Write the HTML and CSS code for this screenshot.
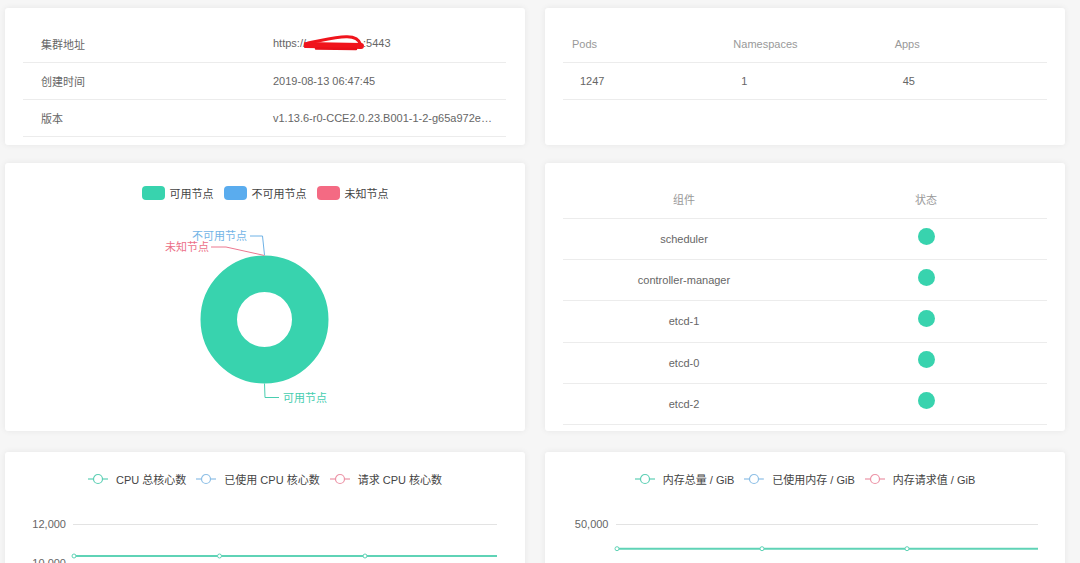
FILE: index.html
```html
<!DOCTYPE html>
<html lang="zh-CN">
<head>
<meta charset="utf-8">
<title>集群概览</title>
<link rel="stylesheet" href="styles.css">
</head>
<body>
<div class="page">
  <div class="row r1">
    <section class="card info">
      <div class="kv-row"><div class="k">集群地址</div><div class="v">https://<svg class="redact" width="60" height="18" viewBox="0 0 60 18"><path d="M2 10 L57 11" stroke="#f0141c" stroke-width="6" fill="none" stroke-linecap="round"/><path d="M4 8 C20 5 32 2 42 1.8 C50 1.5 55 4 57 10" stroke="#f0141c" stroke-width="3" fill="none" stroke-linecap="round"/><path d="M12 13.5 L52 14" stroke="#e8101a" stroke-width="2.5" fill="none" stroke-linecap="round"/></svg>:5443</div></div>
      <div class="kv-row"><div class="k">创建时间</div><div class="v">2019-08-13 06:47:45</div></div>
      <div class="kv-row"><div class="k">版本</div><div class="v">v1.13.6-r0-CCE2.0.23.B001-1-2-g65a972e3d5b1</div></div>
    </section>
    <section class="card stats">
      <div class="st-row st-head"><div>Pods</div><div>Namespaces</div><div>Apps</div></div>
      <div class="st-row st-body"><div>1247</div><div>1</div><div>45</div></div>
    </section>
  </div>

  <div class="row r2">
    <section class="card pie">
      <div class="legend">
        <div class="lg-item"><span class="sw sw-green"></span><span>可用节点</span></div>
        <div class="lg-item"><span class="sw sw-blue"></span><span>不可用节点</span></div>
        <div class="lg-item"><span class="sw sw-red"></span><span>未知节点</span></div>
      </div>
      <svg class="pie-svg" width="520" height="220" viewBox="0 0 520 220">
        <circle cx="259.5" cy="109.5" r="45.75" fill="none" stroke="#38d3ae" stroke-width="36.5"/>
        <polyline points="245,26 257.5,26 259.5,45" fill="none" stroke="#6fb2e6" stroke-width="1"/>
        <polyline points="206,37 221,37 259.5,45.5" fill="none" stroke="#ec7890" stroke-width="1"/>
        <polyline points="259.5,173.5 260,187.5 274,187.5" fill="none" stroke="#49ceb0" stroke-width="1"/>
        <text class="lbl lbl-blue" x="242" y="26" text-anchor="end">不可用节点</text>
        <text class="lbl lbl-red" x="204" y="37" text-anchor="end">未知节点</text>
        <text class="lbl lbl-green" x="278" y="188">可用节点</text>
      </svg>
    </section>
    <section class="card comps">
      <div class="cp-row cp-head"><div>组件</div><div>状态</div></div>
      <div class="cp-row"><div>scheduler</div><div><span class="dot"></span></div></div>
      <div class="cp-row"><div>controller-manager</div><div><span class="dot"></span></div></div>
      <div class="cp-row"><div>etcd-1</div><div><span class="dot"></span></div></div>
      <div class="cp-row"><div>etcd-0</div><div><span class="dot"></span></div></div>
      <div class="cp-row"><div>etcd-2</div><div><span class="dot"></span></div></div>
    </section>
  </div>

  <div class="row r3">
    <section class="card line">
      <div class="legend legend-line">
        <div class="lg-item"><svg class="li" width="20" height="12" viewBox="0 0 20 12"><line x1="0" y1="6" x2="20" y2="6" stroke="#5ccfb4" stroke-width="1.2"/><circle cx="10" cy="6" r="4.5" fill="#fff" stroke="#5ccfb4" stroke-width="1.2"/></svg><span>CPU 总核心数</span></div>
        <div class="lg-item"><svg class="li" width="20" height="12" viewBox="0 0 20 12"><line x1="0" y1="6" x2="20" y2="6" stroke="#8dbfe6" stroke-width="1.2"/><circle cx="10" cy="6" r="4.5" fill="#fff" stroke="#8dbfe6" stroke-width="1.2"/></svg><span>已使用 CPU 核心数</span></div>
        <div class="lg-item"><svg class="li" width="20" height="12" viewBox="0 0 20 12"><line x1="0" y1="6" x2="20" y2="6" stroke="#ec93a6" stroke-width="1.2"/><circle cx="10" cy="6" r="4.5" fill="#fff" stroke="#ec93a6" stroke-width="1.2"/></svg><span>请求 CPU 核心数</span></div>
      </div>
      <svg class="line-svg" width="520" height="160" viewBox="0 0 520 160">
        <text class="ylbl" x="61" y="38" text-anchor="end">12,000</text>
        <line x1="68" y1="38.5" x2="492" y2="38.5" stroke="#e3e3e3" stroke-width="1"/>
        <text class="ylbl" x="61" y="77" text-anchor="end">10,000</text>
        <line x1="68" y1="77.5" x2="492" y2="77.5" stroke="#e3e3e3" stroke-width="1"/>
        <line x1="68" y1="70" x2="492" y2="70" stroke="#5fd3b6" stroke-width="2"/>
        <circle cx="69" cy="70" r="2" fill="#fff" stroke="#5fd3b6" stroke-width="1"/>
        <circle cx="214.5" cy="70" r="2" fill="#fff" stroke="#5fd3b6" stroke-width="1"/>
        <circle cx="360" cy="70" r="2" fill="#fff" stroke="#5fd3b6" stroke-width="1"/>
      </svg>
    </section>
    <section class="card line">
      <div class="legend legend-line">
        <div class="lg-item"><svg class="li" width="20" height="12" viewBox="0 0 20 12"><line x1="0" y1="6" x2="20" y2="6" stroke="#5ccfb4" stroke-width="1.2"/><circle cx="10" cy="6" r="4.5" fill="#fff" stroke="#5ccfb4" stroke-width="1.2"/></svg><span>内存总量 / GiB</span></div>
        <div class="lg-item"><svg class="li" width="20" height="12" viewBox="0 0 20 12"><line x1="0" y1="6" x2="20" y2="6" stroke="#8dbfe6" stroke-width="1.2"/><circle cx="10" cy="6" r="4.5" fill="#fff" stroke="#8dbfe6" stroke-width="1.2"/></svg><span>已使用内存 / GiB</span></div>
        <div class="lg-item"><svg class="li" width="20" height="12" viewBox="0 0 20 12"><line x1="0" y1="6" x2="20" y2="6" stroke="#ec93a6" stroke-width="1.2"/><circle cx="10" cy="6" r="4.5" fill="#fff" stroke="#ec93a6" stroke-width="1.2"/></svg><span>内存请求值 / GiB</span></div>
      </div>
      <svg class="line-svg" width="520" height="160" viewBox="0 0 520 160">
        <text class="ylbl" x="63.5" y="38" text-anchor="end">50,000</text>
        <line x1="71" y1="38.5" x2="493" y2="38.5" stroke="#e3e3e3" stroke-width="1"/>
        <line x1="71" y1="62.7" x2="493" y2="62.7" stroke="#5fd3b6" stroke-width="2"/>
        <circle cx="72" cy="62.7" r="2" fill="#fff" stroke="#5fd3b6" stroke-width="1"/>
        <circle cx="217" cy="62.7" r="2" fill="#fff" stroke="#5fd3b6" stroke-width="1"/>
        <circle cx="362" cy="62.7" r="2" fill="#fff" stroke="#5fd3b6" stroke-width="1"/>
      </svg>
    </section>
  </div>
</div>
</body>
</html>
```

FILE: styles.css
```css
html, body {
  margin: 0;
  padding: 0;
  background: #f6f6f6;
  height: 563px;
  overflow: hidden;
}
body {
  font-family: "Liberation Sans", "Noto Sans CJK SC", sans-serif;
  font-size: 11px;
  color: #666;
}
.page {
  padding: 8px 15px 0 5px;
  display: flex;
  flex-direction: column;
}
.row {
  display: grid;
  grid-template-columns: 520px 520px;
  column-gap: 20px;
}
.r1 { margin-bottom: 18px; }
.r2 { margin-bottom: 21px; }

.card {
  background: #fff;
  border-radius: 3px;
  box-shadow: 0 0 6px rgba(0, 0, 0, 0.07);
  box-sizing: border-box;
}

/* cluster info */
.info, .stats {
  height: 137px;
  padding: 18px 19px 0 18px;
}
.stats { padding-right: 18px; }
.kv-row {
  display: grid;
  grid-template-columns: 232px 1fr;
  height: 37px;
  align-items: center;
  border-bottom: 1px solid #ececec;
  box-sizing: border-box;
}
.kv-row .k { padding-left: 18px; }
.kv-row .v {
  padding-left: 18px;
  padding-right: 10px;
  white-space: nowrap;
  overflow: hidden;
  text-overflow: ellipsis;
}
.redact {
  vertical-align: middle;
  margin-left: -2px;
  margin-right: -1px;
}

/* stats */
.st-row {
  display: grid;
  grid-template-columns: 1fr 1fr 1fr;
  height: 37px;
  align-items: center;
  border-bottom: 1px solid #ececec;
  box-sizing: border-box;
}
.st-head { color: #999; }
.st-head div { padding-left: 9px; }
.st-body div { padding-left: 17px; }

/* pie */
.pie {
  display: flex;
  flex-direction: column;
}
.legend {
  display: flex;
  justify-content: center;
  align-items: center;
  gap: 10px;
  margin-top: 23px;
  height: 14px;
  color: #444;
}
.lg-item {
  display: flex;
  align-items: center;
  gap: 5px;
}
.sw {
  width: 23px;
  height: 14px;
  border-radius: 4px;
  display: block;
}
.sw-green { background: #38d3ae; }
.sw-blue { background: #5aacee; }
.sw-red { background: #f46a83; }
.pie-svg {
  display: block;
  margin-top: 10px;
}
.lbl {
  font-family: "Liberation Sans", "Noto Sans CJK SC", sans-serif;
  font-size: 11px;
  dominant-baseline: central;
}
.lbl-blue { fill: #72b4e6; }
.lbl-red { fill: #ec7088; }
.lbl-green { fill: #45cdaf; }

/* components */
.comps {
  padding: 17px 18px 6px;
}
.cp-row {
  display: grid;
  grid-template-columns: 1fr 1fr;
  height: 41.2px;
  align-items: center;
  text-align: center;
  border-bottom: 1px solid #ececec;
  box-sizing: border-box;
}
.cp-head {
  height: 39px;
  color: #999;
}
.cp-row > div {
  display: flex;
  justify-content: center;
  align-items: center;
}
.dot {
  width: 17px;
  height: 17px;
  border-radius: 50%;
  background: #38d3ae;
  display: block;
  margin-bottom: 6px;
}

/* line charts */
.line {
  height: 200px;
  display: flex;
  flex-direction: column;
}
.legend-line {
  margin-top: 20px;
  gap: 10px;
}
.legend-line .lg-item { gap: 8px; }
.li { display: block; }
.line-svg { display: block; }
.ylbl {
  font-family: "Liberation Sans", sans-serif;
  font-size: 11px;
  fill: #666;
  dominant-baseline: central;
}
```
